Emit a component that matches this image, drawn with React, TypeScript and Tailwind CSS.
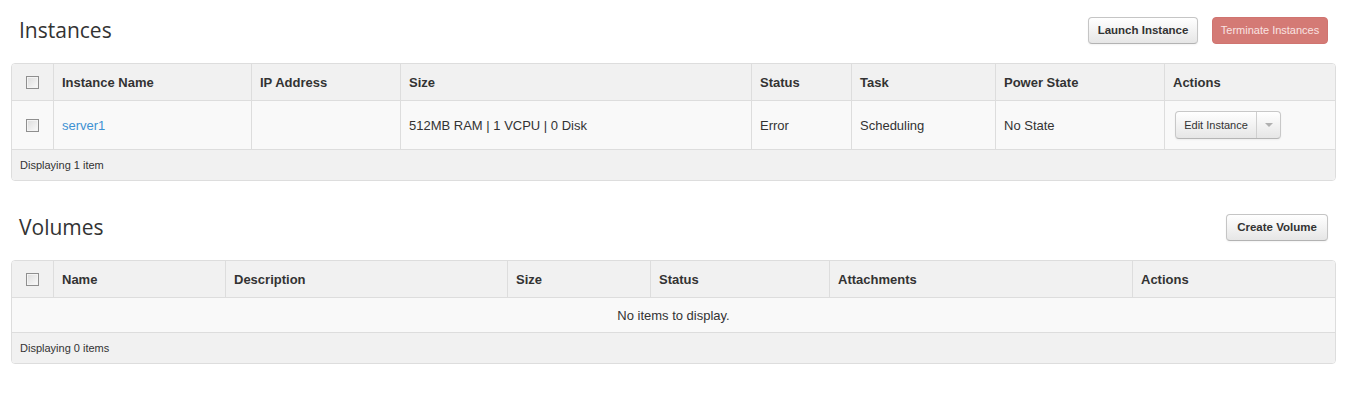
import React from "react";

const Check = () => (
  <span className="inline-block w-[13px] h-[13px] border border-[#8f8f8f] bg-gradient-to-br from-[#dcdcdc] to-[#fbfbfb] shadow-[inset_0_0_0_1px_#f4f4f4]" />
);

const btn =
  "h-[27px] px-[8px] rounded-[4px] border border-[#c5c5c5] border-b-[#b3b3b3] bg-gradient-to-b from-white to-[#e6e6e6] text-[11.5px] font-bold text-[#333] shadow-[inset_0_1px_0_rgba(255,255,255,0.2),0_1px_2px_rgba(0,0,0,0.05)]";

type Col = { label: string; w?: string };

function HeaderRow({ cols }: { cols: Col[] }) {
  return (
    <div className="flex h-[37px] bg-[#f1f1f1] border-b border-[#dddddd]">
      <div className="w-[41px] flex items-center justify-center">
        <Check />
      </div>
      {cols.map((c, i) => (
        <div
          key={i}
          className={`${c.w ?? "flex-1"} border-l border-[#dddddd] flex items-center pl-[8px] pt-[2px] text-[13px] font-bold text-[#333]`}
        >
          {c.label}
        </div>
      ))}
    </div>
  );
}

export default function App() {
  const font = { fontFamily: '"Liberation Sans", Arial, sans-serif' };
  const headFont = { fontFamily: '"Open Sans", "Noto Sans", sans-serif' };
  return (
    <div className="w-[1354px] h-[412px] bg-white pl-[11px] pr-[18px] pt-[17px] text-[#333]" style={font}>
      {/* Instances */}
      <div className="flex items-center justify-between h-[27px] mb-[19px] pl-[8px] pr-[8px]">
        <h2 className="text-[21px] text-[#333] leading-none -mt-[1px]" style={headFont}>
          Instances
        </h2>
        <div className="flex gap-[14px]">
          <button className={`${btn} w-[110px]`}>Launch Instance</button>
          <button className="h-[27px] w-[116px] rounded-[4px] bg-[#d47a75] border border-[#d07470] text-[11px] text-[#f9e3e2]">
            Terminate Instances
          </button>
        </div>
      </div>
      <div className="border border-[#dddddd] rounded-[4px] overflow-hidden">
        <HeaderRow
          cols={[
            { label: "Instance Name", w: "w-[198px]" },
            { label: "IP Address", w: "w-[149px]" },
            { label: "Size", w: "w-[351px]" },
            { label: "Status", w: "w-[100px]" },
            { label: "Task", w: "w-[144px]" },
            { label: "Power State", w: "w-[169px]" },
            { label: "Actions" },
          ]}
        />
        <div className="flex h-[49px] bg-[#f9f9f9] border-b border-[#dddddd] text-[13px] text-[#333]">
          <div className="w-[41px] flex items-center justify-center">
            <Check />
          </div>
          <div className="w-[198px] border-l border-[#dddddd] flex items-center pl-[8px] pt-[2px] text-[#3e91d3]">server1</div>
          <div className="w-[149px] border-l border-[#dddddd]" />
          <div className="w-[351px] border-l border-[#dddddd] flex items-center pl-[8px] pt-[2px]">512MB RAM | 1 VCPU | 0 Disk</div>
          <div className="w-[100px] border-l border-[#dddddd] flex items-center pl-[8px] pt-[2px]">Error</div>
          <div className="w-[144px] border-l border-[#dddddd] flex items-center pl-[8px] pt-[2px]">Scheduling</div>
          <div className="w-[169px] border-l border-[#dddddd] flex items-center pl-[8px] pt-[2px]">No State</div>
          <div className="flex-1 border-l border-[#dddddd] flex items-center pl-[10px]">
            <div className="flex h-[28px] rounded-[4px] border border-[#c8c8c8] border-b-[#b5b5b5] bg-gradient-to-b from-white to-[#e6e6e6] shadow-[0_1px_2px_rgba(0,0,0,0.05)]">
              <span className="w-[80px] flex items-center justify-center text-[11px] text-[#333]">Edit Instance</span>
              <span className="w-[24px] border-l border-[#cfcfcf] flex items-center justify-center">
                <span className="w-0 h-0 border-l-[4px] border-r-[4px] border-t-[4px] border-l-transparent border-r-transparent border-t-[#b0b0b0]" />
              </span>
            </div>
          </div>
        </div>
        <div className="flex items-center h-[30px] bg-[#f1f1f1] pl-[8px] text-[11px] text-[#333]">Displaying 1 item</div>
      </div>

      {/* Volumes */}
      <div className="flex items-center justify-between h-[27px] mt-[33px] mb-[19px] pl-[8px] pr-[8px]">
        <h2 className="text-[21px] text-[#333] leading-none -mt-[1px]" style={headFont}>
          Volumes
        </h2>
        <button className={`${btn} w-[102px]`}>Create Volume</button>
      </div>
      <div className="border border-[#dddddd] rounded-[4px] overflow-hidden">
        <HeaderRow
          cols={[
            { label: "Name", w: "w-[172px]" },
            { label: "Description", w: "w-[282px]" },
            { label: "Size", w: "w-[143px]" },
            { label: "Status", w: "w-[179px]" },
            { label: "Attachments", w: "w-[303px]" },
            { label: "Actions" },
          ]}
        />
        <div className="flex items-center justify-center h-[35px] pt-[1px] bg-[#f9f9f9] border-b border-[#dddddd] text-[13px] text-[#333]">
          No items to display.
        </div>
        <div className="flex items-center h-[30px] bg-[#f1f1f1] pl-[8px] text-[11px] text-[#333]">Displaying 0 items</div>
      </div>
    </div>
  );
}
